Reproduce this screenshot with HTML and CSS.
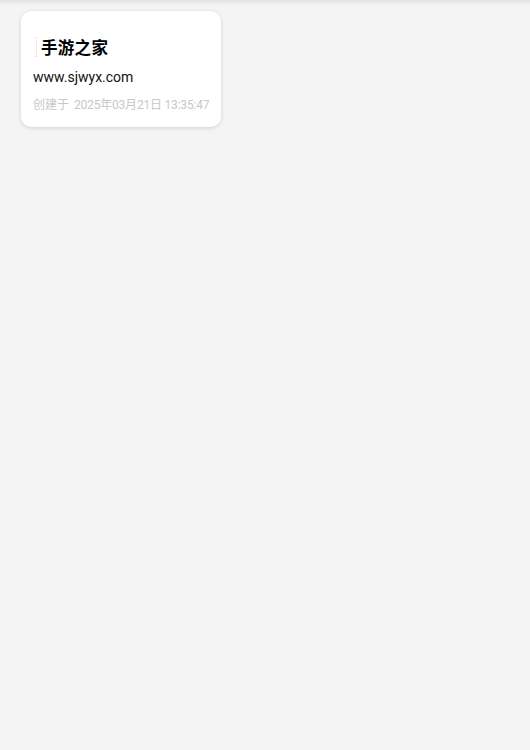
FILE: index.html
```html
<!DOCTYPE html>
<html lang="zh-CN">
<head>
<meta charset="utf-8">
<title>手游之家</title>
<link rel="stylesheet" href="styles.css">
</head>
<body>
<div class="page">
  <div class="list">
    <div class="card">
      <div class="title-row">
        <span class="thumb"></span>
        <span class="title">手游之家</span>
      </div>
      <div class="url">www.sjwyx.com</div>
      <div class="meta"><span class="meta-label">创建于</span><span class="meta-date">2025年03月21日 13:35:47</span></div>
    </div>
  </div>
</div>
</body>
</html>
```
FILE: styles.css
```css
html, body {
  margin: 0;
  padding: 0;
}
body {
  background: #f4f4f4 linear-gradient(#e2e2e2, #f4f4f4 6px) no-repeat;
  min-height: 100vh;
  font-family: Roboto, "Noto Sans CJK SC", sans-serif;
}
.page {
  padding: 11px 0 0 21px;
}
.list {
  display: flex;
  flex-wrap: wrap;
  gap: 12px;
}
.card {
  width: 200px;
  box-sizing: border-box;
  background: #fff;
  border-radius: 10px;
  box-shadow: 0 1px 4px rgba(0, 0, 0, 0.14);
  padding: 25px 12px 13px 12px;
}
.title-row {
  display: flex;
  align-items: center;
  height: 22px;
}
.thumb {
  width: 2px;
  height: 18px;
  border: 1px solid #ebebeb;
  border-left: none;
  border-radius: 0 1px 1px 0;
  margin-left: 1px;
  margin-right: 4px;
}
.title {
  font-family: "Noto Sans CJK SC", sans-serif;
  font-weight: 700;
  font-size: 16.5px;
  letter-spacing: 0.3px;
  line-height: 22px;
  color: #000;
}
.url {
  margin-top: 9px;
  font-size: 14px;
  line-height: 20px;
  color: #111;
}
.meta {
  margin-top: 8px;
  font-size: 12px;
  line-height: 18px;
  color: #c8c8c8;
  white-space: nowrap;
}
.meta-label {
  font-family: "Noto Sans CJK SC", sans-serif;
  margin-right: 5px;
}
.meta-date {
  letter-spacing: -0.2px;
}
```
